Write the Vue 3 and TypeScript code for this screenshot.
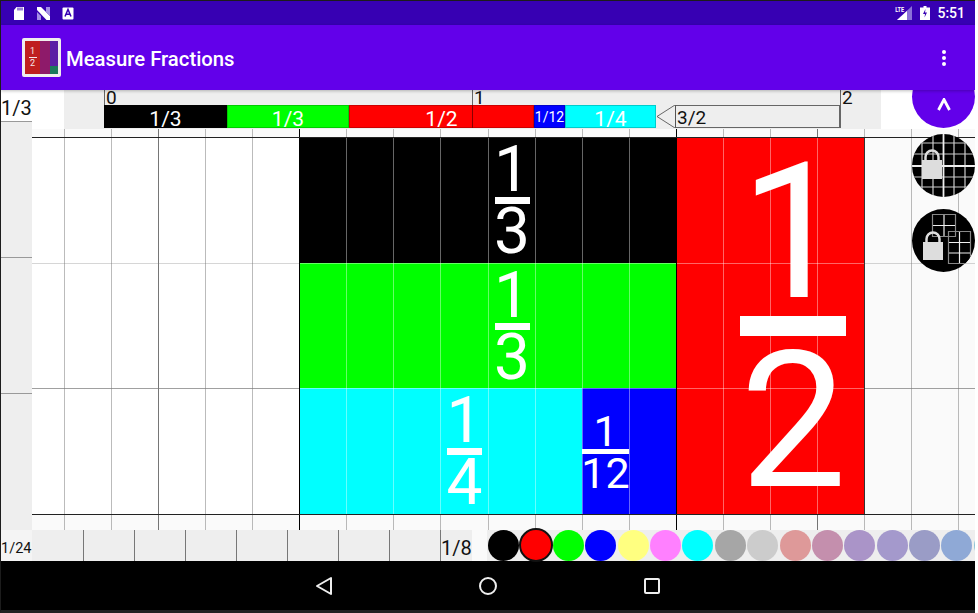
<script setup lang="ts">
interface Block {
  num: string;
  den: string;
  color: string;
  x: number;
  y: number;
  w: number;
  h: number;
  size: string;
  padL: number;
  padR: number;
}

// board coordinates are px from the top left of the board (32,129)
const stepX = 47.09;
const originX = 267.15;
const lineX = (i: number) => Math.round(originX + i * stepX);

const verticals: { x: number; kind: string }[] = [];
for (let i = -5; i <= 14; i++) {
  let kind = 'thin';
  if (i === 0 || i === 8) kind = 'strong';
  else if (i === -3 || i === 11) kind = 'mid';
  verticals.push({ x: lineX(i), kind });
}
const rows = [8, 134, 259, 385];

// the coloured blocks fill one rectangle, the white grid lines only run inside it
const fieldX = 267;
const fieldY = 8;
const fieldLines = [1, 2, 3, 4, 5, 6, 7, 9, 10, 11].map((i) => lineX(i) - fieldX - 1);
const fieldRows = [126, 251];

const blocks: Block[] = [
  { num: '1', den: '3', color: '#000000', x: 0, y: 0, w: 377, h: 126, size: 'md', padL: 47, padR: 0 },
  { num: '1', den: '3', color: '#00ff00', x: 0, y: 126, w: 377, h: 125, size: 'md', padL: 47, padR: 0 },
  { num: '1', den: '4', color: '#00ffff', x: 0, y: 251, w: 282, h: 126, size: 'md', padL: 47, padR: 0 },
  { num: '1', den: '12', color: '#0000ff', x: 282, y: 251, w: 94, h: 126, size: 'sm', padL: 0, padR: 47 },
  { num: '1', den: '2', color: '#ff0000', x: 376, y: 0, w: 188, h: 377, size: 'lg', padL: 47, padR: 0 },
];

const rulerCells = [
  { label: '1/3', w: 123, bg: '#000000', fg: '#fff' },
  { label: '1/3', w: 122, bg: '#00ff00', fg: '#fff' },
  { label: '1/2', w: 185, bg: '#ff0000', fg: '#fff' },
  { label: '1/12', w: 31, bg: '#0000ff', fg: '#fff' },
  { label: '1/4', w: 91, bg: '#00ffff', fg: '#fff' },
];

const swatches = [
  '#000000', '#ff0000', '#00ff00', '#0000ff', '#ffff80', '#ff80ff', '#00ffff', '#a6a6a6',
  '#cccccc', '#de9999', '#c48fad', '#aa94c8', '#a499cc', '#9a9cc6', '#8fa9d6', '#8fc4d6',
];
</script>

<template>
  <div class="screen">
    <div class="status">
      <div class="status-left">
        <svg width="12" height="15" viewBox="0 0 12 15"><path d="M3.5 1H11v13H1V4z" fill="#fff" /><path d="M5 1.500v3M7 1.500v3M9 1.500v3" stroke="#3700b3" stroke-width="1" /></svg>
        <svg class="n-icon" width="15" height="13" viewBox="0 0 15 13"><path d="M1 0h4l9 9v4h-3.500L1 3z" fill="#fff" /><path d="M10 0h4v9l-4-4zM1 5l4 4v4H1z" fill="#a58fe6" /></svg>
        <svg width="12" height="13" viewBox="0 0 12 13"><rect x="0.500" y="0.500" width="11" height="12" rx="1" fill="#fff" /><path d="M3 9.500 6 2.500l3 7M4.200 7.200h3.600" fill="none" stroke="#3700b3" stroke-width="1.500" /></svg>
      </div>
      <div class="status-right">
        <span class="lte">LTE</span>
        <svg class="signal" width="15" height="14" viewBox="0 0 15 14"><path d="M15 0v14H0z" fill="#8a70d8" /><path d="M10 5v9H0z" fill="#fff" /></svg>
        <svg class="battery" width="10" height="14" viewBox="0 0 10 14"><path d="M3.500 0h3v1.500H10V14H0V1.500h3.500z" fill="#fff" /><path d="M5.500 3 3 8h2l-.5 3.500L7 6.500H5z" fill="#3700b3" /></svg>
        <span class="clock">5:51</span>
      </div>
    </div>

    <header class="appbar">
      <div class="logo">
        <div class="logo-red">
          <span>1</span>
          <i></i>
          <span>2</span>
        </div>
        <div class="logo-plum"></div>
        <div class="logo-violet">
          <div class="logo-green"></div>
        </div>
      </div>
      <h1>Measure Fractions</h1>
      <div class="menu"><b></b><b></b><b></b></div>
    </header>

    <main class="workspace">
      <div class="top-row">
        <div class="corner">1/3</div>
        <div class="ruler">
          <div class="ticks">
            <span>0</span>
            <span>1</span>
            <span>2</span>
          </div>
          <div class="bar">
            <div
              v-for="(cell, i) in rulerCells"
              :key="i"
              class="bar-cell"
              :class="{ tiny: cell.label === '1/12' }"
              :style="{ width: cell.w + 'px', background: cell.bg, color: cell.fg }"
            >{{ cell.label }}</div>
            <i class="bar-mark"></i>
            <svg class="bar-arrow" width="19" height="23" viewBox="0 0 19 23"><path d="M19 0 1 11.500 19 23" fill="none" stroke="#444" stroke-width="0.800" /></svg>
            <div class="remainder">3/2</div>
            <i class="bar-end"></i>
          </div>
        </div>
      </div>

      <div class="middle">
        <aside class="side-ruler">
          <div class="side-cell"></div>
          <div class="side-cell"></div>
          <div class="side-cell"></div>
        </aside>

        <section class="board">
          <div class="free-area"></div>
          <i
            v-for="v in verticals"
            :key="'v' + v.x"
            class="vline"
            :class="v.kind"
            :style="{ left: v.x + 'px' }"
          ></i>
          <i
            v-for="(y, i) in rows"
            :key="'h' + y"
            class="hline"
            :class="{ dark: i === 0 || i === 3, pale: i === 1 }"
            :style="{ top: y + 'px' }"
          ></i>
          <div class="field" :style="{ left: fieldX + 'px', top: fieldY + 'px' }">
            <div
              v-for="(b, i) in blocks"
              :key="i"
              class="block"
              :class="b.size"
              :style="{
                left: b.x + 'px',
                top: b.y + 'px',
                width: b.w + 'px',
                height: b.h + 'px',
                background: b.color,
                paddingLeft: b.padL + 'px',
                paddingRight: b.padR + 'px',
              }"
            >
              <div class="frac">
                <span class="n">{{ b.num }}</span>
                <i></i>
                <span class="d">{{ b.den }}</span>
              </div>
            </div>
            <i
              v-for="x in fieldLines"
              :key="'fv' + x"
              class="field-v"
              :style="{ left: x + 'px' }"
            ></i>
            <i
              v-for="y in fieldRows"
              :key="'fh' + y"
              class="field-h"
              :style="{ top: y + 'px' }"
            ></i>
          </div>
        </section>
      </div>

      <div class="bottom-row">
        <div class="unit-ruler">
          <span class="unit-label">1/24</span>
          <div class="unit-cells">
            <i v-for="n in 8" :key="n"></i>
          </div>
          <span class="eighth">1/8</span>
        </div>
        <div class="palette">
          <i
            v-for="(c, i) in swatches"
            :key="i"
            class="swatch"
            :class="{ active: i === 1 }"
            :style="{ background: c }"
          ></i>
        </div>
      </div>

      <button class="fab">
        <svg width="14" height="14" viewBox="0 0 14 14"><path d="M1.500 12 7 1.500 12.500 12" fill="none" stroke="#fff" stroke-width="2.800" /></svg>
      </button>
      <div class="lock-btn grid-lock">
        <svg width="63" height="63" viewBox="0 0 63 63">
          <path d="M0 9h63M0 20h63M0 43h63M0 53h63M10 0v63M21 0v63M42 0v63M53 0v63" stroke="#ccc" stroke-width="1.200" />
          <path d="M0 32h63M31.500 0v63" stroke="#eee" stroke-width="1.800" />
          <path d="M13.500 26v-3a6.500 6.500 0 0 1 13 0v3" fill="none" stroke="#ddd" stroke-width="2.500" />
          <rect x="10" y="26" width="20" height="19" fill="#ddd" />
        </svg>
      </div>
      <div class="lock-btn tile-lock">
        <svg width="63" height="63" viewBox="0 0 63 63">
          <path d="M20.500 5.500h23v22h-23zM36.500 22.500h22v32h-22z" fill="#000" stroke="#888" stroke-width="1.200" />
          <path d="M32 6v21M21 16.500h22M47.500 23v31M37 33.500h21M37 44h21" fill="none" stroke="#eee" stroke-width="1.200" />
          <path d="M14.500 33v-3a6.500 6.500 0 0 1 13 0v3" fill="none" stroke="#ddd" stroke-width="2.500" />
          <rect x="11" y="33" width="20" height="18" fill="#ddd" />
        </svg>
      </div>
    </main>

    <nav class="navbar">
      <svg width="18" height="20" viewBox="0 0 18 20"><path d="M16 2v16L2 10z" fill="none" stroke="#eee" stroke-width="2" stroke-linejoin="round" /></svg>
      <svg width="20" height="20" viewBox="0 0 20 20"><circle cx="10" cy="10" r="8" fill="none" stroke="#eee" stroke-width="2" /></svg>
      <svg width="18" height="18" viewBox="0 0 18 18"><rect x="2" y="2" width="14" height="14" rx="1" fill="none" stroke="#eee" stroke-width="2" /></svg>
    </nav>
  </div>
</template>

<style>
html,
body {
  margin: 0;
  background: #fff;
}
</style>

<style scoped>
.screen {
  width: 974px;
  height: 609px;
  border-top: 1px solid #1c1c1c;
  border-left: 1px solid #1c1c1c;
  border-bottom: 3px solid #222;
  display: flex;
  flex-direction: column;
  overflow: hidden;
  font-family: Roboto, "Liberation Sans", sans-serif;
  background: #fafafa;
}

/* status bar */
.status {
  height: 24px;
  background: #3700b3;
  display: flex;
  justify-content: space-between;
  align-items: center;
  flex-shrink: 0;
}
.status-left {
  display: flex;
  align-items: center;
  gap: 11px;
  padding-left: 12px;
}
.status-right {
  display: flex;
  align-items: center;
  padding-right: 10px;
  color: #fff;
  position: relative;
}
.lte {
  position: absolute;
  left: -3px;
  top: 1px;
  font-size: 7px;
  font-weight: 700;
  transform: scaleX(0.8);
}
.signal {
  margin-right: 8px;
}
.battery {
  margin-right: 7px;
}
.clock {
  font-size: 14px;
  font-weight: 500;
}

/* app bar */
.appbar {
  height: 65px;
  background: #6200ea;
  display: flex;
  align-items: center;
  padding-left: 21px;
  position: relative;
  z-index: 3;
  flex-shrink: 0;
  box-shadow: 0 1px 3px rgba(0, 0, 0, 0.25);
}
.logo {
  width: 33px;
  height: 33px;
  border: 3px solid #f0eeee;
  border-radius: 2px;
  display: flex;
  background: #b71c1c;
}
.logo-red {
  width: 15px;
  background: #bf1f1f;
  color: #f5e6e6;
  font-size: 9px;
  line-height: 9px;
  display: flex;
  flex-direction: column;
  align-items: center;
  justify-content: center;
}
.logo-red i {
  width: 8px;
  height: 1px;
  background: #f5e6e6;
  margin: 1px 0;
}
.logo-plum {
  width: 10px;
  background: #8e1a6a;
}
.logo-violet {
  width: 8px;
  background: #5a1fa5;
  display: flex;
  align-items: flex-end;
}
.logo-green {
  width: 8px;
  height: 8px;
  background: #1b7a5c;
}
.appbar h1 {
  margin: 2px 0 0 5px;
  font-size: 20.3px;
  font-weight: 500;
  color: #fff;
}
.menu {
  margin-left: auto;
  margin-right: 29px;
  display: flex;
  flex-direction: column;
  gap: 2px;
}
.menu b {
  width: 4px;
  height: 4px;
  border-radius: 50%;
  background: #fff;
}

/* work area */
.workspace {
  position: relative;
  flex: 1;
  min-height: 0;
  display: flex;
  flex-direction: column;
}
.top-row {
  height: 39px;
  display: flex;
  flex-shrink: 0;
  background: #fff;
}
.corner {
  width: 31px;
  height: 31px;
  box-sizing: border-box;
  font-size: 20px;
  line-height: 24px;
  padding-top: 6px;
  color: #111;
  white-space: nowrap;
}
.ruler {
  margin-left: 32px;
  width: 817px;
  background: #eeeeee;
  padding-left: 40px;
  box-sizing: border-box;
  display: flex;
  flex-direction: column;
}
.ticks {
  height: 15px;
  display: flex;
}
.ticks span {
  width: 368px;
  flex-shrink: 0;
  border-left: 1px solid #666;
  font-size: 19px;
  line-height: 16px;
  height: 15px;
  color: #111;
  padding-left: 1px;
  box-sizing: border-box;
}
.bar {
  height: 23px;
  display: flex;
  position: relative;
  width: 737px;
}
.bar-cell {
  height: 23px;
  font-size: 21px;
  line-height: 23px;
  padding-top: 3px;
  text-align: center;
  white-space: nowrap;
  flex-shrink: 0;
  box-sizing: border-box;
  box-shadow: inset 0 0 0 1px rgba(0, 0, 0, 0.2);
}
.bar-cell.tiny {
  font-size: 14px;
  padding-top: 1px;
}
.bar-mark {
  position: absolute;
  left: 368px;
  top: 0;
  width: 1px;
  height: 23px;
  background: #8a0000;
}
.bar-arrow {
  flex-shrink: 0;
}
.remainder {
  flex: 1;
  border-top: 1px solid #666;
  border-bottom: 1px solid #666;
  border-left: 1px solid #555;
  font-size: 19px;
  line-height: 24px;
  height: 23px;
  box-sizing: border-box;
  color: #111;
  padding-left: 1px;
}
.bar-end {
  width: 2px;
  height: 23px;
  background: #666;
}

.middle {
  flex: 1;
  min-height: 0;
  display: flex;
}
.side-ruler {
  width: 31px;
  flex-shrink: 0;
  margin-top: -8px;
  display: flex;
  flex-direction: column;
  background: #eeeeee;
  position: relative;
}
.side-cell {
  height: 136px;
  border-top: 1px solid #999;
  box-sizing: border-box;
}
.board {
  flex: 1;
  position: relative;
  overflow: hidden;
  background: #fafafa;
}
.free-area {
  position: absolute;
  left: 0;
  top: 8px;
  width: 268px;
  height: 377px;
  background: #fff;
}
.field {
  position: absolute;
  width: 564px;
  height: 377px;
  border-left: 1px solid #000;
  border-right: 1px solid #333;
}
.block {
  position: absolute;
  box-sizing: border-box;
  display: flex;
  align-items: center;
  justify-content: center;
}
.field-v,
.field-h {
  position: absolute;
  background: rgba(255, 255, 255, 0.4);
}
.field-v {
  top: 0;
  bottom: 0;
  width: 1px;
}
.field-h {
  left: 0;
  right: 0;
  height: 1px;
}
.frac {
  display: flex;
  flex-direction: column;
  align-items: center;
  color: #fff;
  font-weight: 400;
  margin-top: 2px;
}
.frac span {
  display: block;
}
.frac i {
  display: block;
  background: #fff;
}
.md .frac span {
  font-size: 64px;
  line-height: 50px;
}
.md .frac i {
  width: 35px;
  height: 7px;
  margin: 2px 0 3px;
}
.sm .frac span {
  font-size: 43px;
  line-height: 32px;
}
.sm .frac i {
  width: 47px;
  height: 5px;
  margin: 2px 0 3px;
}
.lg .frac span {
  font-size: 190px;
  line-height: 150px;
}
.lg .frac i {
  width: 106px;
  height: 20px;
  margin: 9px 0 10px;
}
.vline {
  position: absolute;
  top: 0;
  bottom: 0;
  width: 1px;
  background: rgba(120, 120, 120, 0.5);
}
.vline.mid {
  background: rgba(60, 60, 60, 0.7);
}
.vline.strong {
  background: #000;
  z-index: 1;
}
.hline {
  position: absolute;
  left: 0;
  right: 0;
  height: 1px;
  background: rgba(120, 120, 120, 0.7);
}
.hline.pale {
  background: rgba(120, 120, 120, 0.3);
}
.hline.dark {
  background: #222;
  z-index: 1;
}

.bottom-row {
  height: 31px;
  display: flex;
  flex-shrink: 0;
}
.unit-ruler {
  display: flex;
  width: 471px;
  flex-shrink: 0;
  position: relative;
}
.unit-label {
  width: 31px;
  font-size: 14.5px;
  line-height: 38px;
  height: 31px;
  overflow: hidden;
  color: #111;
  background: #f4f4f4;
}
.unit-cells {
  display: flex;
  width: 409px;
  background: #eeeeee;
}
.unit-cells i {
  width: 51px;
  height: 31px;
  border-right: 1px solid #777;
  box-sizing: border-box;
}
.unit-cells i:first-child {
  width: 52px;
}
.eighth {
  width: 31px;
  background: #eeeeee;
  font-size: 20px;
  line-height: 36px;
  height: 31px;
  color: #111;
}
.palette {
  margin-left: 15px;
  flex: 1;
  background: #eeeeee;
  display: flex;
  gap: 1.4px;
  padding-left: 1px;
  position: relative;
}
.swatch {
  width: 31px;
  height: 31px;
  border-radius: 50%;
  flex-shrink: 0;
  box-sizing: border-box;
}
.swatch.active {
  width: 34px;
  height: 34px;
  border: 2px solid #111;
  margin: -2px -1.5px 0;
}

.fab {
  position: absolute;
  top: -25px;
  right: 0;
  width: 63px;
  height: 63px;
  border: none;
  border-radius: 50%;
  padding: 33px 0 0;
  background: #6200ea;
  display: flex;
  justify-content: center;
  align-items: flex-start;
  z-index: 2;
}
.lock-btn {
  position: absolute;
  right: 0;
  width: 63px;
  height: 63px;
  border-radius: 50%;
  overflow: hidden;
  background: #000;
  z-index: 2;
}
.grid-lock {
  top: 44px;
}
.tile-lock {
  top: 119px;
}

/* nav bar */
.navbar {
  height: 49px;
  background: #000;
  flex-shrink: 0;
  display: flex;
  align-items: center;
  justify-content: center;
  gap: 145px;
  padding-right: 0;
}
</style>
